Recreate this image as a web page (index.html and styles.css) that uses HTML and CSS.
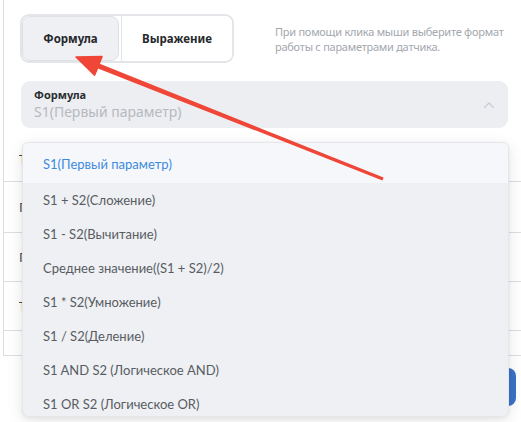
FILE: index.html
```html
<!DOCTYPE html>
<html lang="ru">
<head>
<meta charset="utf-8">
<link rel="stylesheet" href="styles.css">
</head>
<body>
<div class="page">
  <div class="panel">
    <div class="top">
      <div class="segmented">
        <button class="seg seg-active">Формула</button>
        <button class="seg">Выражение</button>
      </div>
      <p class="hint">При помощи клика мыши выберите формат работы с параметрами датчика.</p>
    </div>
    <div class="select">
      <div class="select-text">
        <span class="select-label">Формула</span>
        <span class="select-value">S1(Первый параметр)</span>
      </div>
      <svg class="chevron" width="12" height="8" viewBox="0 0 12 8"><path d="M1.5 6.5 L6 2 L10.5 6.5" fill="none" stroke="#c9ccd1" stroke-width="1.4" stroke-linecap="round" stroke-linejoin="round"/></svg>
    </div>
    <div class="table">
      <div class="row row-head"><span class="cell">Т</span></div>
      <div class="row row-a"><span class="cell">П</span></div>
      <div class="row row-b"><span class="cell">П</span></div>
      <div class="row row-c"><span class="cell">Т</span></div>
    </div>
  </div>
  <div class="footer">
    <button class="primary">Сохранить</button>
  </div>

  <ul class="menu">
    <li class="item item-active">S1(Первый параметр)</li>
    <li class="item">S1 + S2(Сложение)</li>
    <li class="item">S1 - S2(Вычитание)</li>
    <li class="item">Среднее значение((S1 + S2)/2)</li>
    <li class="item">S1 * S2(Умножение)</li>
    <li class="item">S1 / S2(Деление)</li>
    <li class="item">S1 AND S2 (Логическое AND)</li>
    <li class="item">S1 OR S2 (Логическое OR)</li>
  </ul>

  <svg class="arrow" width="521" height="422" viewBox="0 0 521 422">
    <polygon points="97.4,68.2 99.2,63.6 383.6,177.6 382.4,180.4" fill="#ef4638"/>
    <polygon points="76,57 102,56.6 94.6,75.2" fill="#ef4638" stroke="#ef4638" stroke-width="1.5" stroke-linejoin="round"/>
  </svg>
</div>
</body>
</html>
```

FILE: styles.css
```css
* { box-sizing: border-box; }
html, body { margin: 0; padding: 0; background: #ffffff; }
body { font-family: "Noto Sans", "Open Sans", sans-serif; }
.page { position: relative; width: 521px; height: 422px; overflow: hidden; }

.panel {
  margin-left: 3px;
  border-left: 1px solid #dcdde0;
  border-bottom: 1px solid #dcdde0;
  padding: 14px 13px 24px 17px;
}

.top { display: flex; align-items: flex-start; gap: 41px; margin-left: -1px; }
.segmented {
  display: flex;
  width: 214px;
  height: 49px;
  border: 2px solid #e3e5e9;
  border-radius: 9px;
  overflow: hidden;
  flex: none;
}
.seg {
  font-family: "Noto Sans", sans-serif;
  font-weight: 700;
  font-size: 11.5px;
  color: #26282c;
  border: none;
  background: #ffffff;
  padding: 0;
  cursor: pointer;
}
.seg-active {
  width: 97px;
  background: #eef0f4;
  border: 1px solid #dde0e4;
  border-radius: 8px;
}
.seg:not(.seg-active) { flex: 1; border-left: 1px solid #e3e5e9; margin-left: 2px; }
.hint {
  margin: 10px 0 0;
  font-size: 11px;
  line-height: 15px;
  letter-spacing: -0.25px;
  color: #a3a7ae;
  width: 247px;
}

.select {
  margin-top: 18px;
  height: 47px;
  background: #eceef2;
  border-radius: 9px;
  display: flex;
  align-items: center;
  justify-content: space-between;
  padding: 0 13px 0 13px;
}
.select-text { display: flex; flex-direction: column; }
.select-label { font-size: 11px; font-weight: 700; color: #2a2c30; line-height: 14px; }
.select-value { font-size: 14px; color: #b6b9bf; line-height: 20px; }

.table { margin: 9px -13px 0 -17px; }
.row { border-bottom: 1px solid #dcdde0; display: flex; align-items: center; padding-left: 15px; font-size: 13px; color: #444; }
.row-head { height: 45px; }
.row-a { height: 51px; }
.row-b { height: 49px; }
.row-c { height: 49px; }

.footer { display: flex; justify-content: flex-end; padding: 12px 5px 0 0; }
.primary {
  height: 38px;
  width: 120px;
  border: none;
  border-radius: 8px;
  background: #3a73c6;
  color: #fff;
  font-family: "Noto Sans", sans-serif;
  font-size: 13px;
}

.menu {
  position: absolute;
  left: 22px;
  top: 142px;
  width: 487px;
  height: 275px;
  margin: 0;
  padding: 0;
  list-style: none;
  background: #eef0f3;
  border: 1px solid #e4e6ea;
  border-radius: 6px;
  box-shadow: 0 4px 16px rgba(0, 0, 0, 0.10), 0 1px 4px rgba(0, 0, 0, 0.05);
  overflow: hidden;
}
.item {
  height: 34px;
  display: flex;
  align-items: center;
  padding-left: 20px;
  font-family: "Lato", sans-serif;
  font-size: 13px;
  color: #585c62;
}
.item-active { height: 40px; padding-top: 2px; background: #f6f7fa; color: #3b8be0; }

.arrow { position: absolute; left: 0; top: 0; pointer-events: none; }
```
